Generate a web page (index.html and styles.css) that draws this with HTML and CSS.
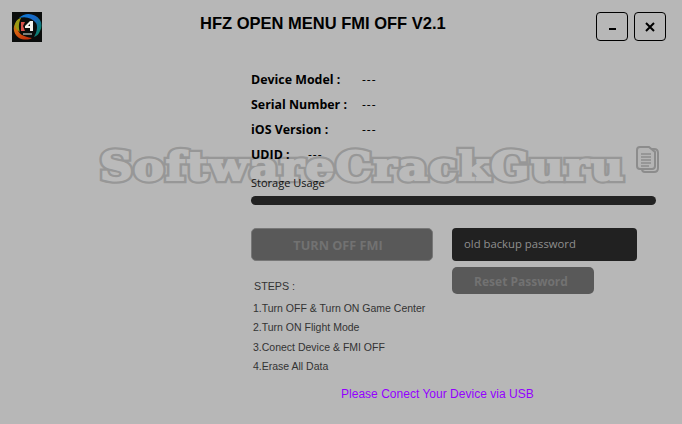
FILE: index.html
```html
<!DOCTYPE html>
<html lang="en">
<head>
<meta charset="utf-8">
<title>HFZ OPEN MENU FMI OFF V2.1</title>
<link rel="stylesheet" href="styles.css">
</head>
<body>
<div class="app">
  <div class="watermark" data-text="SoftwareCrackGuru">SoftwareCrackGuru</div>
  <svg class="wm-icon" width="24" height="28" viewBox="0 0 24 28" aria-hidden="true">
    <path d="M6 3h12q4 0 4 4v15q0 4-4 4H9q-3 0-3-3" fill="none" stroke="#8c8c8c" stroke-width="2"/>
    <path d="M4 1h9l6 5v14q0 3-3 3H4q-3 0-3-3V4q0-3 3-3z" fill="#b4b4b4" stroke="#8c8c8c" stroke-width="2"/>
    <path d="M5 8h10M5 11h10M5 14h10M5 17h10M5 20h8" stroke="#8c8c8c" stroke-width="1.4"/>
  </svg>

  <header class="topbar">
    <svg class="logo" width="30" height="30" viewBox="0 0 30 30" aria-hidden="true">
      <defs>
        <linearGradient id="warm" x1="0" y1="0" x2="0.6" y2="1">
          <stop offset="0" stop-color="#8a8a10"/>
          <stop offset="0.5" stop-color="#d9640f"/>
          <stop offset="1" stop-color="#c2330c"/>
        </linearGradient>
        <linearGradient id="cool" x1="0" y1="0" x2="1" y2="0.6">
          <stop offset="0" stop-color="#0b7fd8"/>
          <stop offset="0.6" stop-color="#1a66c4"/>
          <stop offset="1" stop-color="#0c7f6b"/>
        </linearGradient>
      </defs>
      <rect width="30" height="30" fill="#0b0d0c"/>
      <path d="M7 7C0 12 0 21 7 26c4 2 10 2 13 0C12 25 5 22 5 14c0-3 1-5 2-7z" fill="url(#warm)"/>
      <path d="M3 13C4 8 7 6 9 6 7 10 6 15 8 20 5 18 3 16 3 13z" fill="#9a9a12"/>
      <path d="M7 6c6-6 16-5 21 2 2 3 2 8 0 11-1 3-3 5-6 6 3-5 4-11 2-14C20 6 14 4 7 6z" fill="url(#cool)"/>
      <path d="M9 10h4l-2 4 2 5H9z" fill="#d8504a"/>
      <path d="M18 9h3v10h-3v-3h-5v-2zM18 12l-2 2h2z" fill="#f2f2ee"/>
      <rect x="11" y="21" width="9" height="2" fill="#77807c"/>
    </svg>
    <h1 class="title">HFZ OPEN MENU FMI OFF V2.1</h1>
    <div class="window-controls">
      <button class="win-btn" type="button" aria-label="Minimize"><span class="min-glyph"></span></button>
      <button class="win-btn" type="button" aria-label="Close">
        <svg width="10" height="10" viewBox="0 0 10 10" aria-hidden="true"><path d="M1 1l8 8M9 1l-8 8" stroke="#000" stroke-width="2" fill="none"/></svg>
      </button>
    </div>
  </header>

  <main class="panel">
    <dl class="info">
      <div class="info-row"><dt class="w-model">Device Model :</dt><dd>---</dd></div>
      <div class="info-row"><dt class="w-model">Serial Number :</dt><dd>---</dd></div>
      <div class="info-row"><dt class="w-model">iOS Version :</dt><dd>---</dd></div>
      <div class="info-row"><dt class="w-udid">UDID :</dt><dd>---</dd></div>
    </dl>
    <div class="storage-label">Storage Usage</div>
    <div class="storage-bar"></div>

    <div class="actions">
      <div class="left-col">
        <button class="btn btn-main" type="button">TURN OFF FMI</button>
        <div class="steps">
          <div class="steps-head">STEPS :</div>
          <ol class="steps-list">
            <li>1.Turn OFF &amp; Turn ON Game Center</li>
            <li>2.Turn ON Flight Mode</li>
            <li>3.Conect Device &amp; FMI OFF</li>
            <li>4.Erase All Data</li>
          </ol>
        </div>
      </div>
      <div class="right-col">
        <div class="pass-input">old backup password</div>
        <button class="btn btn-reset" type="button">Reset Password</button>
      </div>
    </div>
    <p class="status">Please Conect Your Device via USB</p>
  </main>
</div>
</body>
</html>
```
FILE: styles.css
```css
* { box-sizing: border-box; }
html, body { margin: 0; padding: 0; }
body { width: 682px; height: 424px; overflow: hidden; background: #b7b7b7; }

.app { position: relative; width: 682px; height: 424px; background: #b7b7b7; color: #000; font-family: "Liberation Sans", Arial, sans-serif; }

.topbar { position: relative; display: flex; align-items: flex-start; height: 67px; padding: 12px 16px 0 12px; }
.logo { flex: none; }
.title { flex: 1; margin: 0; padding: 1px 0 0 158px; font-size: 16.5px; line-height: 20px; font-weight: 700; white-space: nowrap; }
.window-controls { display: flex; gap: 6px; }
.win-btn { width: 32px; height: 29px; padding: 0; display: flex; align-items: center; justify-content: center; background: transparent; border: 1px solid #000; border-radius: 4px; }
.min-glyph { display: block; width: 7px; height: 2px; margin-top: 5px; background: #000; }

.panel { position: relative; padding-left: 251px; }
.info { margin: 0; }
.info-row { display: flex; height: 25px; align-items: center; font-family: "Open Sans", sans-serif; font-size: 12.4px; }
.info-row dt { font-weight: 700; white-space: nowrap; }
.info-row dd { margin: 0; font-size: 12px; letter-spacing: 1px; }
.w-model { width: 111px; }
.w-udid { width: 57px; }

.storage-label { margin-top: 8px; font-family: "Open Sans", sans-serif; font-size: 11px; line-height: 16px; color: #111; }
.storage-bar { width: 405px; height: 9px; margin-top: 5px; border-radius: 5px; background: #222; }

.actions { display: flex; margin-top: 23px; }
.left-col { width: 201px; }
.right-col { width: 185px; }

.btn { display: block; border: 0; background: #595959; color: #727272; font-family: "Open Sans", sans-serif; font-weight: 700; }
.btn-main { width: 182px; height: 33px; padding: 0 8px 0 0; border: 1px solid #777; border-radius: 5px; font-size: 12.7px; }
.btn-reset { width: 142px; height: 27px; margin-top: 6px; padding: 2px 4px 0 0; border-radius: 5px; font-size: 12px; }
.pass-input { height: 33px; padding-left: 12px; line-height: 32px; border-radius: 4px; background: #212121; color: #8f8f8f; font-family: "Open Sans", sans-serif; font-size: 11.3px; }

.steps { padding-top: 16px; color: #333; }
.steps-head { padding-left: 3px; line-height: 18px; font-size: 10.7px; }
.steps-list { margin: 3px 0 0; padding: 0 0 0 2px; list-style: none; }
.steps-list li { height: 19.4px; line-height: 20px; white-space: nowrap; font-size: 10.5px; }

.status { margin: 9px 0 0 90px; color: #9400ff; font-size: 12px; line-height: 18px; white-space: nowrap; letter-spacing: 0.02px; }

.watermark { position: absolute; left: 100px; top: 141px; font-family: "DejaVu Serif", serif; font-weight: 700; font-size: 40px; line-height: 50px; letter-spacing: 1.55px; white-space: nowrap; color: #979797; -webkit-text-stroke: 6.5px #979797; transform: scaleX(1.12); transform-origin: left center; }
.watermark::after { content: attr(data-text); position: absolute; left: 0; top: 0; color: #bababa; -webkit-text-stroke: 2px #bababa; }
.wm-icon { position: absolute; left: 636px; top: 146px; }
```
